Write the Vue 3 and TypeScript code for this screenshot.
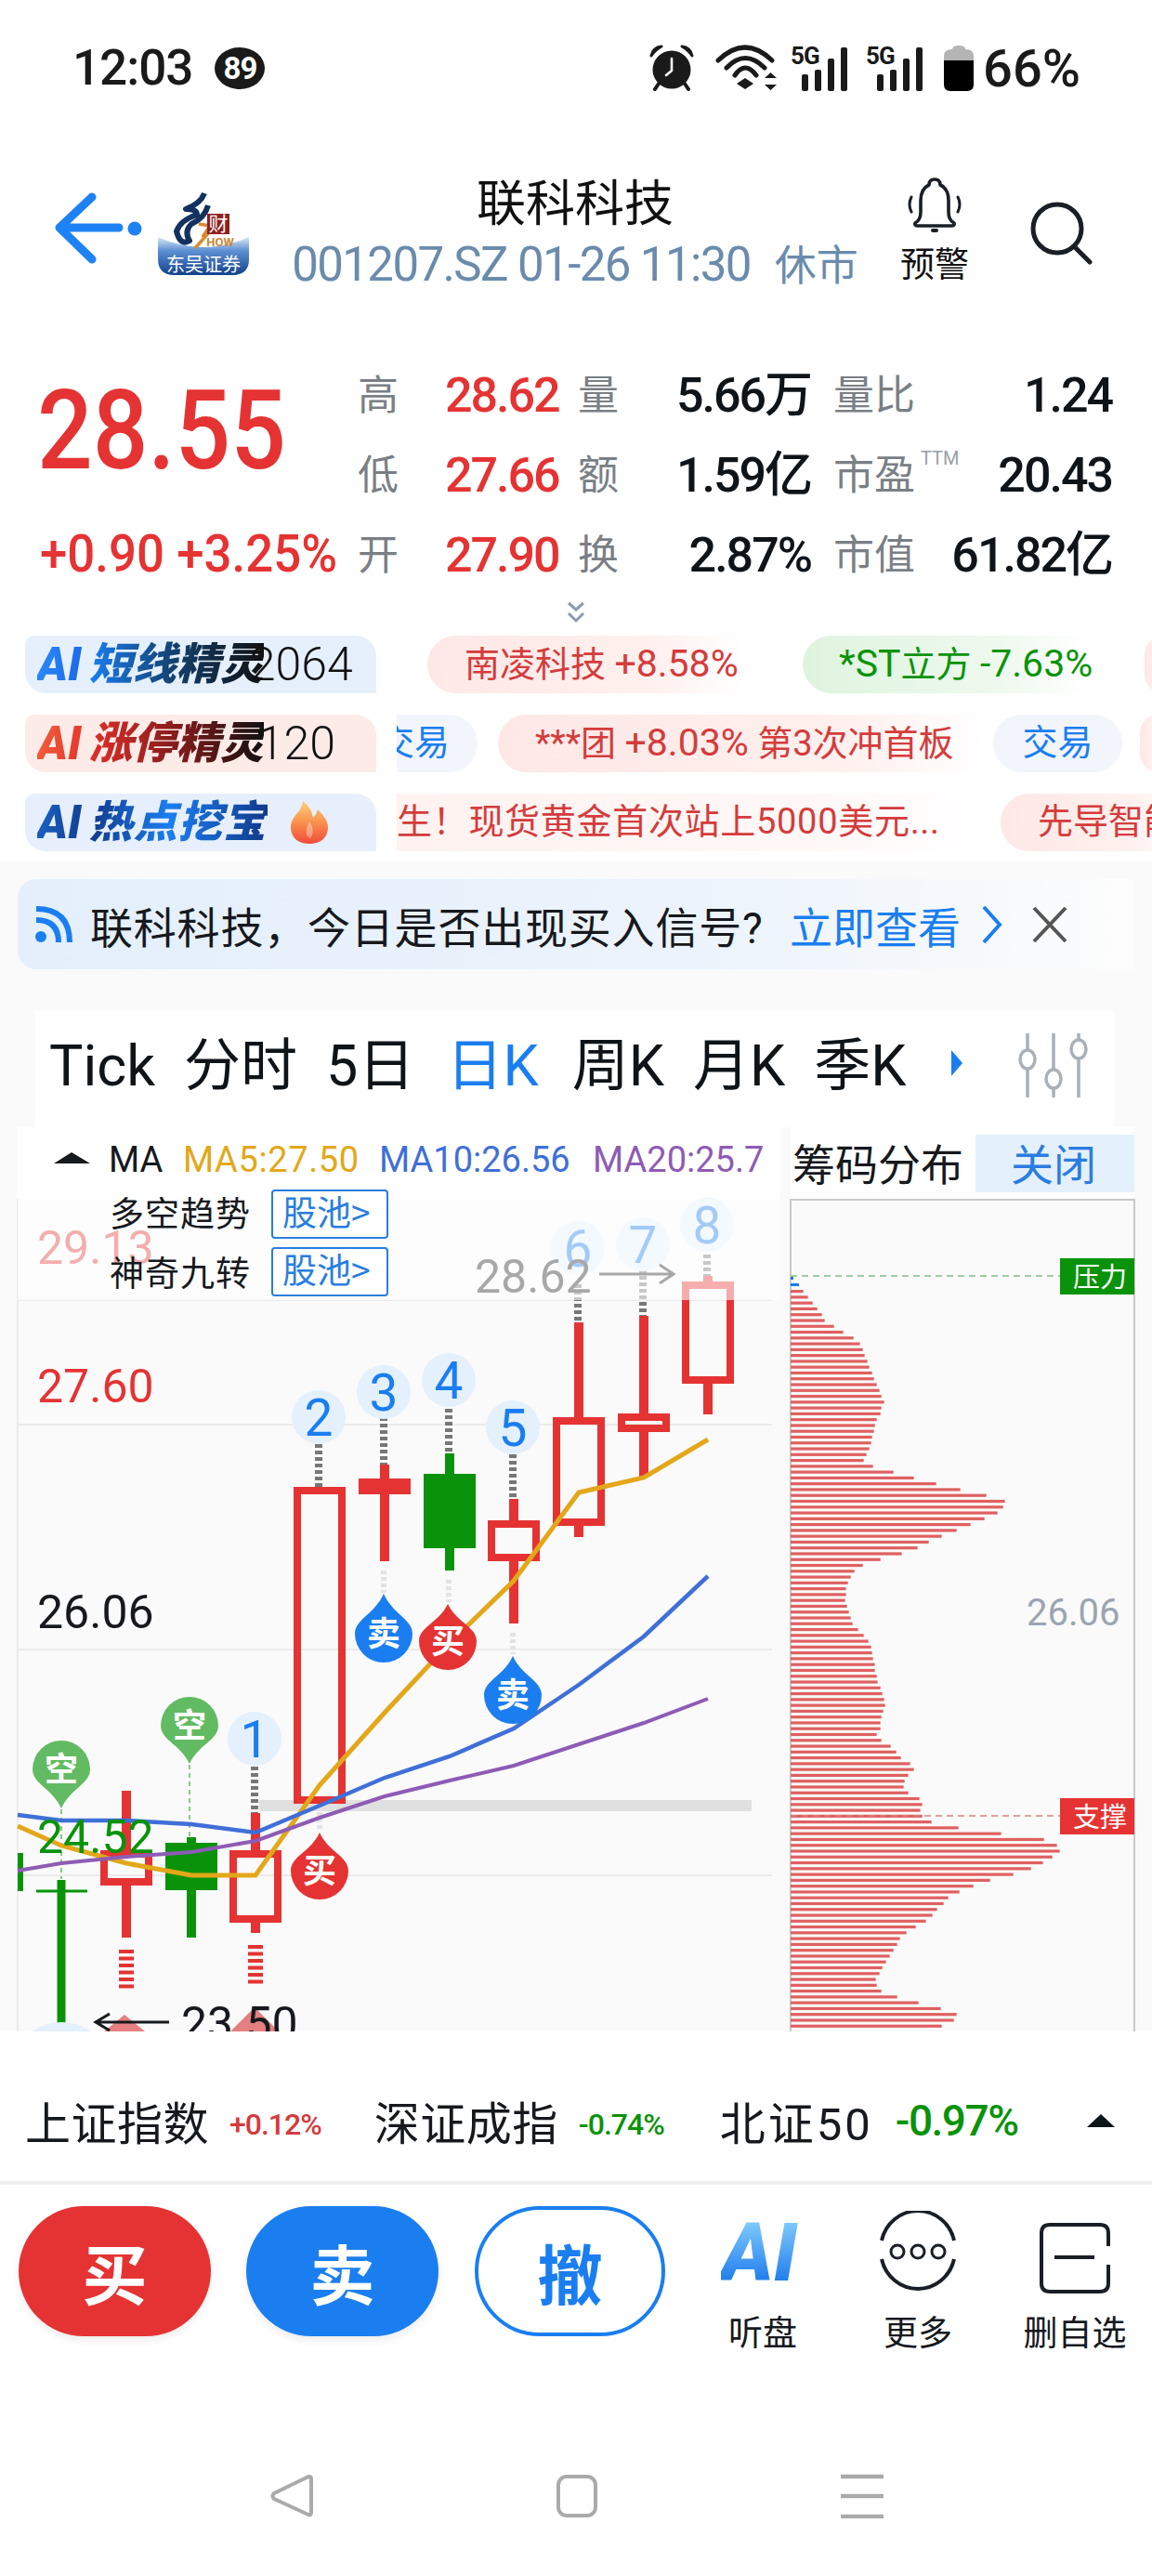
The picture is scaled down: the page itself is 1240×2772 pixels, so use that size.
<script setup lang="ts">
interface Candle { x: number; top: number; bt: number; bb: number; bottom: number; color: string; hollow: boolean }
const RED = '#e53333'
const GREEN = '#0a930a'
const BLUE = '#1a7ef0'

const candles: Candle[] = [
  { x: 136, top: 1927, bt: 1991, bb: 2029, bottom: 2085, color: RED, hollow: true },
  { x: 206, top: 1977, bt: 1983, bb: 2034, bottom: 2085, color: GREEN, hollow: false },
  { x: 275, top: 1951, bt: 1991, bb: 2069, bottom: 2080, color: RED, hollow: true },
  { x: 344, top: 1600, bt: 1600, bb: 1941, bottom: 1941, color: RED, hollow: true },
  { x: 414, top: 1576, bt: 1591, bb: 1608, bottom: 1680, color: RED, hollow: false },
  { x: 484, top: 1564, bt: 1586, bb: 1666, bottom: 1690, color: GREEN, hollow: false },
  { x: 553, top: 1613, bt: 1636, bb: 1680, bottom: 1747, color: RED, hollow: true },
  { x: 623, top: 1423, bt: 1525, bb: 1642, bottom: 1654, color: RED, hollow: true },
  { x: 693, top: 1416, bt: 1521, bb: 1541, bottom: 1590, color: RED, hollow: true },
  { x: 762, top: 1373, bt: 1379, bb: 1489, bottom: 1522, color: RED, hollow: true },
]

const ma5 = '19,1965 66,1986 136,2005 206,2018 275,2018 344,1921 414,1843 484,1768 553,1701 623,1606 693,1590 762,1549'
const ma10 = '19,1953 66,1959 136,1959 206,1963 275,1972 344,1943 414,1913 484,1890 553,1860 623,1813 693,1761 762,1696'
const ma20 = '19,2013 66,2005 136,1998 206,1993 275,1981 344,1956 414,1933 484,1916 553,1900 623,1877 693,1854 762,1828'

const bubbles = [
  { n: '1', x: 274, y: 1871, a: 1901, b: 1951 },
  { n: '2', x: 343, y: 1525, a: 1554, b: 1600 },
  { n: '3', x: 413, y: 1498, a: 1525, b: 1576 },
  { n: '4', x: 483, y: 1485, a: 1516, b: 1564 },
  { n: '5', x: 552, y: 1536, a: 1565, b: 1613 },
  { n: '6', x: 622, y: 1343, a: 1382, b: 1423 },
  { n: '7', x: 692, y: 1339, a: 1366, b: 1416 },
  { n: '8', x: 761, y: 1318, a: 1350, b: 1373 },
]

function drop(cx: number, cy: number, r: number, tip: number): string {
  const dir = tip < cy ? 1 : -1
  const sweep = dir === 1 ? 1 : 0
  const m = (tip + cy) / 2
  return `M${cx} ${tip} C${cx + r * 0.3} ${m},${cx + r} ${cy - dir * r * 0.5},${cx + r} ${cy} A${r} ${r} 0 1 ${sweep} ${cx - r} ${cy} C${cx - r} ${cy - dir * r * 0.5},${cx - r * 0.3} ${m},${cx} ${tip}Z`
}

const drops = [
  { t: '卖', x: 413, y: 1758, tip: 1715, c: BLUE },
  { t: '买', x: 482, y: 1766, tip: 1726, c: RED },
  { t: '卖', x: 552, y: 1824, tip: 1782, c: BLUE },
  { t: '买', x: 344, y: 2013, tip: 1972, c: RED },
  { t: '空', x: 204, y: 1857, tip: 1898, c: '#62bb62' },
  { t: '空', x: 66, y: 1904, tip: 1946, c: '#62bb62' },
]

const widths = [105,120,135,150,165,174,204,234,267,288,297,303,312,318,327,333,342,351,357,366,357,354,342,336,333,327,324,318,309,300,330,396,462,534,612,696,756,750,732,690,645,600,552,510,474,423,354,297,270,258,249,243,243,240,246,252,258,264,282,300,315,324,327,330,336,336,342,345,354,360,366,369,363,357,354,354,342,357,387,405,420,450,462,444,432,429,444,480,489,483,489,519,606,744,882,924,933,909,879,840,783,708,654,609,573,558,537,522,501,468,438,417,408,396,384,372,360,351,339,342,357,408,477,549,600,591,552]
const bars = widths.map((z, i) => ({ y: 1388 + i * 6.275, w: (z - 64) / 3 }))

const tabs = ['Tick', '分时', '5日', '日K', '周K', '月K', '季K']
const stats = [
  ['高', '28.62', '量', '5.66万', '量比', '1.24'],
  ['低', '27.66', '额', '1.59亿', '市盈', '20.43'],
  ['开', '27.90', '换', '2.87%', '市值', '61.82亿'],
]
</script>

<template>
  <div class="page">
    <div class="status">
      <div class="time">12:03</div>
      <div class="badge">89</div>
      <div class="status-right">
        <svg class="alarm" width="48" height="50" viewBox="0 0 48 50">
          <circle cx="24" cy="27" r="20.5" fill="#1a1a1a" />
          <path d="M2 12 Q4 3 13 2 Q7 5 2 12Z M46 12 Q44 3 35 2 Q41 5 46 12Z" fill="#1a1a1a" stroke="#1a1a1a" stroke-width="3" stroke-linejoin="round" />
          <path d="M10 42 L6 48 M38 42 L42 48" stroke="#1a1a1a" stroke-width="4" stroke-linecap="round" />
          <path d="M24 15 V28 L18 33" stroke="#fff" stroke-width="2.6" fill="none" stroke-linecap="round" stroke-linejoin="round" />
        </svg>
        <svg class="wifi" width="70" height="50" viewBox="0 0 70 50">
          <path d="M4 17 Q33 -11 62 17 M13 25 Q33 4 54 25 M22 33 Q33 17 45 33" fill="none" stroke="#1a1a1a" stroke-width="5" stroke-linecap="round" />
          <path d="M33 36 L42 42 L33 48 L24 42Z" fill="#1a1a1a" />
          <path d="M54 36 L60.5 30 L67 36Z M54 43 L60.5 49 L67 43Z" fill="#1a1a1a" />
        </svg>
        <svg v-for="k in 2" :key="k" class="signal" width="64" height="50" viewBox="0 0 64 50">
          <text x="0" y="21" class="fiveg">5G</text>
          <rect x="12" y="32" width="7" height="18" rx="2" fill="#1a1a1a" />
          <rect x="26" y="27" width="7" height="23" rx="2" fill="#1a1a1a" />
          <rect x="40" y="15" width="7" height="35" rx="2" fill="#1a1a1a" />
          <rect x="54" y="3" width="7" height="47" rx="2" fill="#1a1a1a" />
        </svg>
        <svg class="battery" width="32" height="50" viewBox="0 0 32 50">
          <path d="M9 5 Q9 1 16 1 Q23 1 23 5 Q32 5 32 12 V17 H0 V12 Q0 5 9 5Z" fill="#b4b4b4" />
          <path d="M0 17 H32 V43 Q32 50 25 50 H7 Q0 50 0 43Z" fill="#000" />
        </svg>
        <div class="pct">66%</div>
      </div>
    </div>

    <div class="header">
      <svg class="back" width="98" height="80" viewBox="0 0 98 80">
        <path d="M41 6 L6 39 L41 73 M6 39 H70" fill="none" stroke="#1e82f5" stroke-width="9" stroke-linecap="round" stroke-linejoin="round" />
        <circle cx="87" cy="40" r="7.5" fill="#1e82f5" />
      </svg>
      <svg class="logo" width="98" height="92" viewBox="0 0 98 92">
        <defs>
          <linearGradient id="lg1" x1="0" y1="0" x2="0" y2="1">
            <stop offset="0" stop-color="#dcebf8" />
            <stop offset="0.35" stop-color="#5f92d4" />
            <stop offset="1" stop-color="#12408c" />
          </linearGradient>
        </defs>
        <path d="M0 50 Q49 72 98 50 V74 Q98 91 80 91 H18 Q0 91 0 74Z" fill="url(#lg1)" />
        <path d="M50 3 Q46 14 30 20 Q42 20 42 26 Q24 32 20 44 Q24 60 34 54 Q28 44 36 36 Q50 30 54 16" fill="none" stroke="#14325f" stroke-width="6" stroke-linejoin="round" />
        <path d="M44 36 L56 38 L48 50 L56 44 L40 62" fill="none" stroke="#d98a2e" stroke-width="3.5" />
        <rect x="53" y="25" width="24" height="22" fill="#8e2020" />
        <text x="65" y="43" class="cai">财</text>
        <text x="67" y="60" class="how">HOW</text>
        <text x="49" y="87" class="dw">东吴证券</text>
      </svg>
      <div class="title-wrap">
        <div class="title">联科科技</div>
        <div class="sub">001207.SZ 01-26 11:30<span class="sub-state">休市</span></div>
      </div>
      <div class="bell-wrap">
        <svg width="64" height="62" viewBox="0 0 64 62">
          <path d="M32 3 Q38 3 38 9 Q47 13 47 26 V38 Q47 47 53 50 Q54 53 50 53 H14 Q10 53 11 50 Q17 47 17 38 V26 Q17 13 26 9 Q26 3 32 3Z" fill="none" stroke="#1a1f26" stroke-width="3.6" stroke-linejoin="round" />
          <path d="M7 22 Q3 30 7 38 M57 22 Q61 30 57 38" fill="none" stroke="#1a1f26" stroke-width="3" stroke-linecap="round" />
          <rect x="28" y="56" width="8" height="4" rx="2" fill="#1a1f26" />
        </svg>
        <div class="bell-text">预警</div>
      </div>
      <svg class="search" width="68" height="68" viewBox="0 0 68 68">
        <circle cx="29" cy="29" r="26" fill="none" stroke="#1a1f26" stroke-width="5" />
        <path d="M48 49 L64 65" stroke="#1a1f26" stroke-width="5" stroke-linecap="round" />
      </svg>
    </div>

    <div class="stats">
      <div class="hero">
        <div class="price">28.55</div>
        <div class="change">+0.90 +3.25%</div>
      </div>
      <div class="stat-grid">
        <template v-for="(r, i) in stats" :key="i">
          <span class="lab">{{ r[0] }}</span>
          <span class="val red">{{ r[1] }}</span>
          <span class="lab">{{ r[2] }}</span>
          <span class="val dark right">{{ r[3] }}</span>
          <span class="lab lab-b">{{ r[4] }}<sup v-if="i === 1" class="ttm">TTM</sup></span>
          <span class="val dark right">{{ r[5] }}</span>
        </template>
      </div>
    </div>
    <div class="more-row">
      <svg width="22" height="24" viewBox="0 0 22 24">
        <path d="M3 2 L11 9 L19 2 M3 13 L11 21 L19 13" fill="none" stroke="#8d9bad" stroke-width="3" />
      </svg>
    </div>

    <div class="tickers">
      <div class="t-row">
        <div class="tag tag-blue">
          <span class="ai ai-blue">AI</span><span class="tag-name name-blue">短线精灵</span><span class="tag-num n1">2064</span>
        </div>
        <div class="marquee pad-first">
          <div class="chip chip-red c1">南凌科技 <span class="num">+8.58%</span></div>
          <div class="chip chip-green c2"><span class="num">*ST</span>立方 <span class="num">-7.63%</span></div>
          <div class="chip chip-red c3"></div>
        </div>
      </div>
      <div class="t-row">
        <div class="tag tag-red">
          <span class="ai ai-red">AI</span><span class="tag-name name-red">涨停精灵</span><span class="tag-num n2">120</span>
        </div>
        <div class="marquee">
          <div class="chip chip-trade c4"><span>交易</span></div>
          <div class="chip chip-red c5">***团 <span class="num">+8.03%</span> 第3次冲首板</div>
          <div class="chip chip-trade c6">交易</div>
          <div class="chip chip-red c7"></div>
        </div>
      </div>
      <div class="t-row">
        <div class="tag tag-hot">
          <span class="ai ai-navy">AI</span><span class="tag-name name-hot">热点挖宝</span>
          <svg class="flame" width="42" height="46" viewBox="0 0 42 46">
            <defs>
              <linearGradient id="fl" x1="0" y1="0" x2="0" y2="1">
                <stop offset="0" stop-color="#fbd27a" />
                <stop offset="0.55" stop-color="#f98a4a" />
                <stop offset="1" stop-color="#f14a3a" />
              </linearGradient>
            </defs>
            <path d="M14 0 Q24 8 25 18 Q29 14 30 9 Q42 20 41 30 Q39 45 22 46 Q3 46 1 30 Q0 22 7 14 Q13 8 14 0Z" fill="url(#fl)" />
            <path d="M21 22 Q28 32 22 40 Q14 36 21 22Z" fill="#fff" opacity="0.35" />
          </svg>
        </div>
        <div class="marquee">
          <div class="chip chip-news c8">生！现货黄金首次站上5000美元...</div>
          <div class="chip chip-red c9">先导智能</div>
        </div>
      </div>
    </div>

    <div class="feed">
      <div class="banner">
        <svg width="40" height="40" viewBox="0 0 40 40" class="rss">
          <circle cx="6" cy="33" r="6" fill="#1a7ef0" />
          <path d="M1 15 Q25 15 25 39 M1 3 Q37 3 37 39" fill="none" stroke="#1a7ef0" stroke-width="6" />
        </svg>
        <span class="b-text">联科科技，今日是否出现买入信号?</span>
        <span class="b-link">立即查看</span>
        <svg width="26" height="44" viewBox="0 0 26 44" class="b-chev">
          <path d="M4 3 L21 22 L4 41" fill="none" stroke="#1a7ef0" stroke-width="4" />
        </svg>
        <svg width="38" height="40" viewBox="0 0 38 40" class="b-x">
          <path d="M2 2 L36 38 M36 2 L2 38" fill="none" stroke="#555" stroke-width="4" />
        </svg>
      </div>

      <div class="tabs">
        <span v-for="(t, i) in tabs" :key="t" class="tab" :class="{ active: i === 3 }">{{ t }}</span>
        <svg class="tab-tri" width="12" height="28" viewBox="0 0 12 28"><path d="M0 0 L12 14 L0 28Z" fill="#1a7ef0" /></svg>
        <svg class="sliders" width="76" height="72" viewBox="0 0 76 72">
          <path d="M10 1 V19 M10 39 V70 M38 1 V40 M38 60 V70 M65 1 V8 M65 28 V70" stroke="#a9b0b8" stroke-width="3.5" fill="none" />
          <ellipse cx="10" cy="29" rx="8" ry="10" fill="none" stroke="#a9b0b8" stroke-width="3.5" />
          <ellipse cx="38" cy="50" rx="8" ry="10" fill="none" stroke="#a9b0b8" stroke-width="3.5" />
          <ellipse cx="65" cy="18" rx="8" ry="10" fill="none" stroke="#a9b0b8" stroke-width="3.5" />
        </svg>
      </div>

      <div class="chart-row">
        <svg class="chart" width="840" height="973" viewBox="0 1213 840 973">
          <rect x="19" y="1213" width="821" height="77" fill="#fff" />
          <path d="M19 1399 H831 M19 1533 H831 M19 1775 H831 M19 2018 H831 M19 1290 V2186" stroke="#ebebeb" stroke-width="2" fill="none" />
          <rect x="279" y="1937" width="530" height="12" fill="#e0e0e0" />

          <g v-for="c in candles" :key="c.x">
            <path :d="`M${c.x} ${c.top} V${c.bt} M${c.x} ${c.bb} V${c.bottom}`" :stroke="c.color" stroke-width="10" fill="none" />
            <rect v-if="c.hollow" :x="c.x - 24" :y="c.bt + 4" width="48" :height="c.bb - c.bt - 8" fill="none" :stroke="c.color" stroke-width="8" />
            <rect v-else :x="c.x - 28" :y="c.bt" width="56" :height="c.bb - c.bt" :fill="c.color" />
          </g>
          <rect x="19" y="1994" width="6" height="41" :fill="GREEN" />
          <path d="M39 2035 H94" :stroke="GREEN" stroke-width="3" />
          <path d="M66 2023 V2179" :stroke="GREEN" stroke-width="9" />
          <path d="M136 2098 V2143 M275 2093 V2136" :stroke="RED" stroke-width="16" stroke-dasharray="4 3.5" />
          <path d="M66 1947 V2022 M204 1899 V1977" stroke="#62bb62" stroke-width="1.5" stroke-dasharray="5 4" />
          <path d="M413 1690 V1714 M483 1700 V1724 M552 1757 V1780 M344 1950 V1970" stroke="#e3e3e3" stroke-width="6" stroke-dasharray="4 3" />

          <g v-for="b in bubbles" :key="b.n">
            <path :d="`M${b.x} ${b.a} V${b.b}`" stroke="#777" stroke-width="8" stroke-dasharray="4 3" />
            <ellipse :cx="b.x" :cy="b.y" rx="29" ry="29" fill="#e4f0fc" />
            <text :x="b.x" :y="b.y + 20" class="bubble-t">{{ b.n }}</text>
          </g>

          <polyline :points="ma5" fill="none" stroke="#e3a71a" stroke-width="5" />
          <polyline :points="ma10" fill="none" stroke="#3f6fd8" stroke-width="4.5" />
          <polyline :points="ma20" fill="none" stroke="#8e5bb5" stroke-width="4" />

          <g v-for="(d, i) in drops" :key="i">
            <path :d="drop(d.x, d.y, 31, d.tip)" :fill="d.c" />
            <text :x="d.x" :y="d.y + 13" class="drop-t">{{ d.t }}</text>
          </g>

          <text x="40" y="1360" class="axis" fill="#e53333">29.13</text>
          <rect x="19" y="1290" width="821" height="109" fill="#fff" opacity="0.6" />

          <text x="40" y="1509" class="axis" fill="#e53333">27.60</text>
          <text x="40" y="1752" class="axis" fill="#16191d">26.06</text>
          <text x="40" y="1994" class="axis" :fill="GREEN">24.52</text>
          <text x="511" y="1391" class="axis" fill="#a8a8a8">28.62</text>
          <path d="M645 1371 H724 M710 1361 L725 1371 L710 1381" stroke="#a8a8a8" stroke-width="3" fill="none" />
          <path d="M134 2168 L156 2186 H112Z M274 2160 L300 2186 H248Z" fill="#e58080" />
          <text x="195" y="2195" class="axis" fill="#16191d">23.50</text>
          <path d="M182 2176 H104 M118 2167 L103 2176 L118 2185" stroke="#16191d" stroke-width="3" fill="none" />
          <ellipse cx="66" cy="2206" rx="42" ry="30" fill="#e4f0fc" />

          <path d="M58 1252 L77 1240 L97 1252Z" fill="#16191d" />
          <text x="117" y="1261" class="leg" fill="#16191d">MA</text>
          <text x="197" y="1261" class="leg ma5" fill="#e3a71a">MA5:27.50</text>
          <text x="408" y="1261" class="leg" fill="#3f6fd8">MA10:26.56</text>
          <text x="638" y="1261" class="leg" fill="#8e5bb5">MA20:25.7</text>

          <text x="118" y="1320" class="ovl">多空趋势</text>
          <rect x="293" y="1281" width="124" height="51" rx="3" fill="#fff" stroke="#2a7de0" stroke-width="2" />
          <text x="304" y="1319" class="ovl-b">股池&gt;</text>
          <text x="118" y="1384" class="ovl">神奇九转</text>
          <rect x="293" y="1343" width="124" height="51" rx="3" fill="#fff" stroke="#2a7de0" stroke-width="2" />
          <text x="304" y="1381" class="ovl-b">股池&gt;</text>
        </svg>

        <svg class="panel" width="400" height="973" viewBox="840 1213 400 973">
          <rect x="851" y="1213" width="370" height="78" fill="#fff" />
          <text x="853" y="1270" class="p-title">筹码分布</text>
          <rect x="1050" y="1221" width="171" height="62" fill="#e4f0fc" />
          <text x="1134" y="1270" class="p-close">关闭</text>
          <path d="M851 2186 V1291 H1221 V2186" fill="none" stroke="#c9c9c9" stroke-width="2" />
          <rect x="851" y="1374" width="3" height="3" fill="#1f78c8" />
          <rect x="851" y="1381" width="9" height="3" fill="#1a7ef0" />
          <rect v-for="(b, i) in bars" :key="i" x="851" :y="b.y" :width="b.w" height="3.2" fill="#e06060" />
          <path d="M851 1373 H1141" stroke="#7fc07f" stroke-width="1.5" stroke-dasharray="7 5" />
          <path d="M851 1954 H1141" stroke="#d98080" stroke-width="1.5" stroke-dasharray="7 5" />
          <rect x="1141" y="1354" width="80" height="39" fill="#0a930a" />
          <text x="1184" y="1385" class="p-tag">压力</text>
          <rect x="1141" y="1935" width="80" height="39" fill="#e53333" />
          <text x="1184" y="1966" class="p-tag">支撑</text>
          <text x="1105" y="1749" class="p-axis">26.06</text>
        </svg>
      </div>
    </div>

    <div class="index-bar">
      <span class="idx-name n-a">上证指数</span><span class="idx-val s red-t">+0.12%</span>
      <span class="idx-name n-b">深证成指</span><span class="idx-val s green-t">-0.74%</span>
      <span class="idx-name n-c">北证50</span><span class="idx-val l green-t">-0.97%</span>
      <svg class="idx-tri" width="30" height="14" viewBox="0 0 30 14"><path d="M15 0 L30 14 H0Z" fill="#0f1419" /></svg>
    </div>

    <div class="actions">
      <div class="btn buy">买</div>
      <div class="btn sell">卖</div>
      <div class="btn cancel">撤</div>
      <div class="act a-ai">
        <span class="ai-big">AI</span>
        <span class="act-t">听盘</span>
      </div>
      <div class="act a-more">
        <svg width="84" height="86" viewBox="0 0 84 86">
          <path d="M3 32 A40 41 0 0 1 81 32 M3 52 A40 41 0 0 0 81 52" fill="none" stroke="#1a1f26" stroke-width="4" />
          <circle cx="20" cy="44" r="7" fill="none" stroke="#1a1f26" stroke-width="3" />
          <circle cx="42" cy="44" r="7" fill="none" stroke="#1a1f26" stroke-width="3" />
          <circle cx="64" cy="44" r="7" fill="none" stroke="#1a1f26" stroke-width="3" />
        </svg>
        <span class="act-t">更多</span>
      </div>
      <div class="act a-del">
        <svg width="78" height="78" viewBox="0 0 78 78">
          <path d="M75 26 V12 Q75 3 66 3 H12 Q3 3 3 12 V66 Q3 75 12 75 H66 Q75 75 75 66 V46" fill="none" stroke="#1a1f26" stroke-width="4" />
          <path d="M17 38 H60" stroke="#1a1f26" stroke-width="4" />
        </svg>
        <span class="act-t">删自选</span>
      </div>
    </div>

    <div class="nav">
      <svg width="48" height="48" viewBox="0 0 48 48">
        <path d="M43 3 Q45 3 45 6 V42 Q45 45 42 44 L5 27 Q2 24 5 21 L40 4Z" fill="none" stroke="#aaa" stroke-width="4" stroke-linejoin="round" />
      </svg>
      <svg width="44" height="46" viewBox="0 0 44 46">
        <rect x="2" y="2" width="40" height="42" rx="9" fill="none" stroke="#aaa" stroke-width="4" />
      </svg>
      <svg width="46" height="48" viewBox="0 0 46 48">
        <path d="M0 3 H46 M0 24 H46 M0 46 H46" stroke="#aaa" stroke-width="4.5" />
      </svg>
    </div>
  </div>
</template>

<style>
html, body { margin: 0; background: #fff; }
</style>

<style scoped>
.page {
  width: 1240px;
  height: 2772px;
  overflow: hidden;
  background: #fff;
  display: flex;
  flex-direction: column;
  font-family: Roboto, "Noto Sans CJK SC", sans-serif;
  color: #0f1419;
}
.status { height: 190px; flex: none; display: flex; align-items: flex-start; padding-top: 48px; box-sizing: border-box; position: relative; }
.time { margin-left: 78px; font-size: 53px; line-height: 50px; font-weight: 500; color: #1a1a1a; letter-spacing: -1px; }
.badge { margin-left: 24px; margin-top: 3px; width: 54px; height: 45px; border-radius: 50%; background: #1a1a1a; color: #fff; font-size: 33px; font-weight: 700; line-height: 45px; text-align: center; letter-spacing: -1px; }
.status-right { margin-left: auto; margin-right: 77px; display: flex; align-items: flex-start; }
.alarm { margin-right: 22px; }
.wifi { margin-right: 12px; }
.signal { margin-right: 17px; }
.signal + .battery { margin-left: 3px; }
.fiveg { font-size: 26px; font-weight: 700; font-family: Roboto, sans-serif; fill: #1a1a1a; letter-spacing: -1px; }
.battery { margin-right: 10px; }
.pct { font-size: 56px; line-height: 50px; font-weight: 500; letter-spacing: 0; color: #1a1a1a; margin-top: 1px; }

.header { height: 130px; flex: none; display: flex; position: relative; }
.back { margin-left: 58px; margin-top: 16px; flex: none; }
.logo { margin-left: 14px; margin-top: 15px; flex: none; }
.title-wrap { width: 636px; margin-left: 33px; display: flex; flex-direction: column; align-items: center; }
.title { font-size: 53px; line-height: 60px; color: #111; }
.sub { font-size: 51px; line-height: 62px; margin-top: 4px; color: #6a8bac; letter-spacing: -1.6px; white-space: nowrap; }
.sub-state { margin-left: 26px; font-size: 45px; letter-spacing: 0; }
.bell-wrap { width: 100px; margin-left: 19px; display: flex; flex-direction: column; align-items: center; flex: none; }
.bell-text { font-size: 37px; line-height: 44px; margin-top: 12px; color: #111; }
.search { margin-left: 53px; margin-top: 27px; flex: none; }

.stats { flex: none; display: flex; margin-top: 63px; height: 270px; }
.hero { width: 385px; flex: none; position: relative; }
.price { margin-left: 40px; margin-top: 26px; font-size: 118px; line-height: 110px; font-weight: 500; color: #e53333; transform: scaleX(0.89); transform-origin: left center; white-space: nowrap; }
.change { margin-left: 43px; margin-top: 45px; font-size: 55px; line-height: 64px; font-weight: 500; color: #e53333; white-space: nowrap; transform: scaleX(0.96); transform-origin: left center; }
.stat-grid { display: grid; grid-template-columns: 94px 143px 43px 208px 112px 212px; grid-auto-rows: 86px; align-items: center; }
.lab { font-size: 44px; color: #7a7f85; white-space: nowrap; position: relative; line-height: 86px; }
.lab-b { padding-left: 24px; }
.val { font-size: 52px; font-weight: 500; letter-spacing: -2px; white-space: nowrap; line-height: 86px; }
.val.red { color: #e53333; }
.val.dark { color: #0f1419; }
.right { text-align: right; }
.ttm { position: absolute; left: 118px; top: 12px; font-size: 20px; line-height: 24px; color: #9a9fa5; }
.more-row { flex: none; height: 24px; display: flex; justify-content: center; margin-top: -6px; }

.tickers { flex: none; display: flex; flex-direction: column; gap: 23px; margin-top: 13px; height: 232px; }
.t-row { display: flex; height: 62px; flex: none; }
.tag { margin-left: 27px; width: 378px; height: 62px; flex: none; border-radius: 10px 22px 0 22px; display: flex; align-items: center; padding-left: 13px; box-sizing: border-box; overflow: hidden; }
.tag-blue { background: #e6f0fc; }
.tag-red { background: #fdebe8; }
.tag-hot { background: #e7effc; }
.ai { font-size: 50px; font-weight: 900; font-style: italic; color: transparent; -webkit-background-clip: text; background-clip: text; line-height: 60px; padding-right: 6px; flex: none; }
.ai-blue { background-image: linear-gradient(100deg, #2a8cff, #1a62e0); }
.ai-red { background-image: linear-gradient(100deg, #f4603a, #e0302a); }
.ai-navy { background-image: linear-gradient(100deg, #1a64c8, #123a8a); }
.tag-name { font-size: 47px; font-weight: 900; font-style: italic; color: transparent; -webkit-background-clip: text; background-clip: text; line-height: 60px; white-space: nowrap; margin-left: 2px; flex: none; }
.name-blue { background-image: linear-gradient(90deg, #1a7ef0, #123a60 55%, #111); }
.name-red { background-image: linear-gradient(90deg, #e0302a, #7a1a1a 55%, #111); }
.name-hot { background-image: linear-gradient(90deg, #123a8a, #1a7ef0 45%, #123a8a); letter-spacing: 1px; }
.tag-num { font-size: 50px; font-weight: 300; color: #111; line-height: 60px; flex: none; }
.n1 { margin-left: -15px; }
.n2 { margin-left: -6px; }
.flame { margin-left: 24px; flex: none; }
.marquee { flex: 1; min-width: 0; margin-left: 22px; display: flex; overflow: hidden; }
.pad-first { padding-left: 33px; }
.chip { height: 62px; line-height: 60px; border-radius: 32px 0 0 32px; font-size: 38px; flex: none; white-space: nowrap; box-sizing: border-box; }
.num { font-size: 41px; }
.chip-red { color: #d43c3c; background: linear-gradient(90deg, #fde8e6, #fff0ee 70%, #fff); }
.chip-green { color: #0a930a; background: linear-gradient(90deg, #dff4df, #eef9ee 70%, #fff); }
.chip-trade { color: #1a7ef0; background: #f3f5fd; border-radius: 32px; text-align: center; }
.chip-news { color: #d43c3c; background: linear-gradient(90deg, #fff2f0, #fff8f7 70%, #fff); border-radius: 0; letter-spacing: .7px; }
.c1 { width: 340px; padding-left: 40px; }
.c2 { width: 306px; margin-left: 64px; padding-left: 39px; }
.c3 { width: 20px; margin-left: 62px; }
.c4 { width: 87px; border-radius: 0 32px 32px 0; padding-right: 30px; overflow: hidden; direction: rtl; text-align: left; }
.c5 { width: 528px; margin-left: 22px; padding-left: 40px; }
.c6 { width: 139px; margin-left: 5px; }
.c7 { width: 20px; margin-left: 19px; }
.c8 { width: 633px; }
.c9 { width: 200px; margin-left: 17px; padding-left: 40px; }

.feed { flex: none; background: #fafafa; margin-top: 11px; height: 1259px; display: flex; flex-direction: column; padding-top: 19px; box-sizing: border-box; overflow: hidden; }
.banner { margin-left: 19px; width: 1201px; height: 97px; flex: none; border-radius: 20px 0 0 20px; background: linear-gradient(90deg, #e4effb, #ecf3fc 60%, #f8fafc 90%, #fdfdfd); display: flex; align-items: center; box-sizing: border-box; padding-left: 19px; }
.rss { flex: none; }
.b-text { margin-left: 19px; font-size: 46px; color: #16191d; white-space: nowrap; width: 753px; letter-spacing: .8px; flex: none; }
.b-link { font-size: 46px; color: #1a7ef0; white-space: nowrap; width: 205px; flex: none; }
.b-chev { flex: none; }
.b-x { margin-left: 30px; flex: none; }
.tabs { margin-top: 45px; margin-left: 38px; width: 1162px; height: 125px; flex: none; background: #fff; display: flex; align-items: baseline; padding-left: 15px; padding-top: 17px; box-sizing: border-box; position: relative; }
.tab { font-size: 61px; line-height: 84px; color: #0f1419; white-space: nowrap; margin-right: 31px; }
.tab:nth-child(1) { margin-right: 31px; }
.tab:nth-child(3) { margin-right: 34px; }
.tab:nth-child(4) { margin-right: 36px; }
.tab.active { color: #1a7ef0; }
.tab-tri { margin-left: 17px; flex: none; align-self: center; margin-top: -30px; }
.sliders { margin-left: 60px; flex: none; align-self: center; margin-top: -24px; }
.chart-row { display: flex; height: 973px; flex: none; }
.chart, .panel { display: block; flex: none; }
.bubble-t { font-size: 55px; fill: #1a7ef0; text-anchor: middle; font-family: Roboto, sans-serif; }
.drop-t { font-size: 36px; font-weight: 700; fill: #fff; text-anchor: middle; font-family: "Noto Sans CJK SC", sans-serif; }
.axis { font-size: 50px; font-family: Roboto, sans-serif; }
.leg { font-size: 38px; font-family: Roboto, sans-serif; }
.ma5 { letter-spacing: .6px; }
.ovl { font-size: 37px; fill: #16191d; font-family: "Noto Sans CJK SC", sans-serif; letter-spacing: 1px; }
.ovl-b { font-size: 37px; fill: #2a7de0; font-family: "Noto Sans CJK SC", sans-serif; }
.p-title { font-size: 46px; fill: #16191d; font-family: "Noto Sans CJK SC", sans-serif; }
.p-close { font-size: 46px; fill: #2a7de0; text-anchor: middle; font-family: "Noto Sans CJK SC", sans-serif; }
.p-tag { font-size: 29px; fill: #fff; text-anchor: middle; font-family: "Noto Sans CJK SC", sans-serif; }
.p-axis { font-size: 40px; fill: #9aa5b1; font-family: Roboto, sans-serif; }
.cai { font-size: 21px; fill: #fff; text-anchor: middle; font-family: "Noto Sans CJK SC", sans-serif; }
.how { font-size: 13px; font-weight: 700; fill: #c98a3a; text-anchor: middle; font-family: Roboto, sans-serif; }
.dw { font-size: 20px; fill: #fff; text-anchor: middle; font-family: "Noto Sans CJK SC", sans-serif; }

.index-bar { flex: none; height: 165px; display: flex; align-items: center; border-bottom: 4px solid #eee; box-sizing: border-box; padding-top: 30px; }
.idx-name { font-size: 49px; color: #16191d; white-space: nowrap; letter-spacing: .5px; }
.idx-val { font-weight: 500; white-space: nowrap; }
.idx-val.s { font-size: 32px; margin-left: 22px; margin-top: 8px; letter-spacing: -1px; }
.idx-val.l { font-size: 46px; margin-left: 24px; letter-spacing: -1.5px; }
.red-t { color: #d43c3c; }
.green-t { color: #0a930a; }
.n-a { margin-left: 27px; }
.n-b { margin-left: 57px; }
.n-c { margin-left: 60px; letter-spacing: 3px; }
.idx-tri { margin-left: 74px; flex: none; }
.actions { flex: none; height: 258px; display: flex; align-items: flex-start; padding-top: 23px; box-sizing: border-box; }
.btn { height: 140px; border-radius: 70px; flex: none; display: flex; align-items: center; justify-content: center; font-size: 70px; font-weight: 700; box-sizing: border-box; font-family: "Noto Sans CJK SC", sans-serif; }
.buy { width: 207px; margin-left: 20px; background: #e53333; color: #fff; box-shadow: 0 4px 10px rgba(0,0,0,.08); }
.sell { width: 207px; margin-left: 38px; background: #1a7ef0; color: #fff; box-shadow: 0 4px 10px rgba(0,0,0,.08); }
.cancel { width: 205px; margin-left: 39px; border: 4px solid #1a7ef0; color: #1a7ef0; background: #fff; }
.act { flex: none; height: 158px; display: flex; flex-direction: column; align-items: center; justify-content: space-between; }
.act svg { flex: none; }
.a-ai { width: 120px; margin-left: 45px; margin-top: 6px; height: 152px; }
.a-more { width: 120px; margin-left: 47px; margin-top: 5px; height: 153px; }
.a-del { width: 120px; margin-left: 49px; margin-top: 17px; height: 141px; }
.ai-big { font-size: 86px; font-weight: 900; font-style: italic; color: transparent; background-image: linear-gradient(180deg, #8fd6ff, #0a6be8); -webkit-background-clip: text; background-clip: text; line-height: 90px; padding-right: 8px; }
.act-t { font-size: 37px; line-height: 40px; color: #16191d; white-space: nowrap; }
.nav { flex: none; display: flex; align-items: center; padding-top: 53px; }
.nav svg { flex: none; }
.nav svg:nth-child(1) { margin-left: 290px; }
.nav svg:nth-child(2) { margin-left: 261px; }
.nav svg:nth-child(3) { margin-left: 262px; }
</style>
